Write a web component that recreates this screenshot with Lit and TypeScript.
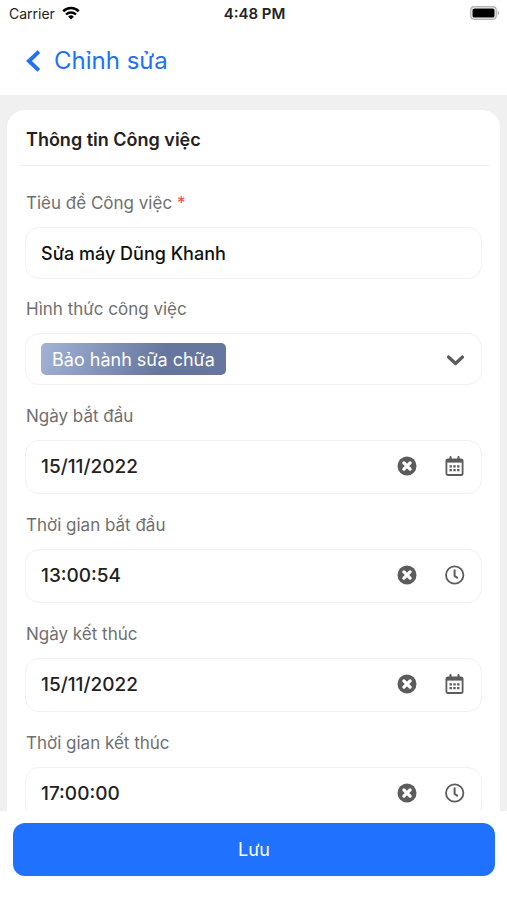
import { LitElement, html, css, svg } from "lit";
import { customElement, property, state } from "lit/decorators.js";

const clearIcon = svg`<svg viewBox="0 0 20 20" width="20" height="20" aria-hidden="true">
  <circle cx="10" cy="10" r="9.5" fill="#5c5c5c"/>
  <path d="M6.9 6.9l6.2 6.2M13.1 6.9l-6.2 6.2" stroke="#fff" stroke-width="3.3" stroke-linecap="round"/>
</svg>`;

const calendarIcon = svg`<svg viewBox="0 0 20 20" width="20" height="20" aria-hidden="true">
  <rect x="1.4" y="3.4" width="16.2" height="15.6" rx="1.6" fill="none" stroke="#5c5c5c" stroke-width="1.8"/>
  <path d="M1.1 3.2h16.8v3.4H1.1z" fill="#5c5c5c"/>
  <path d="M5.5 1.2v3M13.5 1.2v3" stroke="#5c5c5c" stroke-width="2.2" stroke-linecap="round"/>
  <path d="M4.5 10.3h2.4M8.3 10.3h2.4M12.1 10.3h2.4M4.5 14.2h2.4M8.3 14.2h2.4M12.1 14.2h2.4" stroke="#5c5c5c" stroke-width="2.3"/>
</svg>`;

const clockIcon = svg`<svg viewBox="1 0 20 20" width="20" height="20" aria-hidden="true">
  <circle cx="10.7" cy="10" r="8.7" fill="none" stroke="#5c5c5c" stroke-width="1.8"/>
  <path d="M10.6 5.200v5.800l2.500 1.600" fill="none" stroke="#5c5c5c" stroke-width="2" stroke-linecap="round" stroke-linejoin="round"/>
</svg>`;

@customElement("picker-field")
export class PickerField extends LitElement {
  @property() label = "";
  @property() kind: "date" | "time" = "date";
  @property() value = "";

  static styles = css`
    :host { display: block; }
    .label { display: block; height: 24px; line-height: 24px; font-size: 17px; color: #6f6f6f; margin-bottom: 12px; padding-left: 1px; }
    .box {
      display: flex; align-items: center; height: 54px; box-sizing: border-box;
      border: 1px solid #f1f1f1; border-radius: 14px; padding: 0 16px 2px 15px; background: #fff;
    }
    .input {
      flex: 1; min-width: 0; border: 0; padding: 0; outline: 0; background: none;
      font: 500 19px "Inter", sans-serif; color: #222;
    }
    .icon { display: flex; border: 0; padding: 0; background: none; cursor: pointer; }
    .clear { margin-right: 28px; }
  `;

  render() {
    return html`
      <label class="label" for="value">${this.label}</label>
      <div class="box">
        <input class="input" id="value" type="text" .value=${this.value}
          @input=${(e: Event) => (this.value = (e.target as HTMLInputElement).value)} />
        <button class="icon clear" type="button" aria-label="Xóa" @click=${() => (this.value = "")}>${clearIcon}</button>
        <button class="icon" type="button" aria-label=${this.label}>${this.kind === "date" ? calendarIcon : clockIcon}</button>
      </div>
    `;
  }
}

@customElement("status-bar")
export class StatusBar extends LitElement {
  static styles = css`
    :host {
      display: grid; grid-template-columns: 1fr auto 1fr; align-items: center;
      height: 26px; padding: 0 7px 0 9px; font-size: 14px; color: #222; flex: none;
    }
    .carrier { display: flex; align-items: center; gap: 7px; }
    .time { font-size: 15px; font-weight: 600; }
    .battery { justify-self: end; display: flex; }
  `;

  render() {
    return html`
      <div class="carrier">
        <span>Carrier</span>
        <svg viewBox="0 0 18 14" width="18" height="14" aria-hidden="true">
          <path d="M1.200 5.200a11.200 11.200 0 0 1 15.600 0" fill="none" stroke="#000" stroke-width="2.600"/>
          <path d="M4 8.500a7.200 7.200 0 0 1 10 0" fill="none" stroke="#000" stroke-width="2.400"/>
          <path d="M9 13.600l-2.900-2.900a4.200 4.200 0 0 1 5.800 0z" fill="#000"/>
        </svg>
      </div>
      <div class="time">4:48 PM</div>
      <div class="battery">
        <svg viewBox="0 0 30 14" width="30" height="14" aria-hidden="true">
          <rect x=".8" y=".8" width="25.400" height="12.400" rx="3.400" fill="#fff" stroke="#b4b4b4" stroke-width="1.400"/>
          <rect x="2.500" y="2.500" width="22" height="9" rx="1.600" fill="#000"/>
          <path d="M27.600 4.800a2.300 2.300 0 0 1 0 4.400z" fill="#b4b4b4"/>
        </svg>
      </div>
    `;
  }
}

@customElement("app-root")
export class AppRoot extends LitElement {
  @state() private jobTitle = "Sửa máy Dũng Khanh";

  private pickers = [
    { label: "Ngày bắt đầu", kind: "date", value: "15/11/2022" },
    { label: "Thời gian bắt đầu", kind: "time", value: "13:00:54" },
    { label: "Ngày kết thúc", kind: "date", value: "15/11/2022" },
    { label: "Thời gian kết thúc", kind: "time", value: "17:00:00" },
  ];

  static styles = css`
    :host {
      display: flex; flex-direction: column; height: 100vh; background: #fff;
      font-family: "Inter", sans-serif; color: #222;
    }
    .header { flex: none; display: flex; align-items: center; gap: 13px; height: 69px; padding: 0 26px; box-sizing: border-box; }
    .back { display: flex; border: 0; padding: 0; background: none; color: #2171f7; cursor: pointer; }
    .title { margin: 0; font-size: 24px; font-weight: 400; line-height: 32px; color: #2171f7; }
    .main { flex: 1; min-height: 0; overflow-y: auto; scrollbar-width: none; background: #f0f0f0; padding: 15px 7px 0; }
    .card { background: #fff; border-radius: 18px 18px 0 0; padding: 0 18px 24px; }
    .heading {
      margin: 0 -7px 0 -5px; padding: 0 6px; height: 56px; box-sizing: border-box;
      border-bottom: 1px solid #eeeeee; font-size: 18px; font-weight: 600; line-height: 59px;
    }
    .form { padding-top: 25px; display: flex; flex-direction: column; }
    .group + .group { margin-top: 18px; }
    .picker { margin-top: 19px; }
    .label { display: block; height: 24px; line-height: 24px; font-size: 17px; color: #6f6f6f; margin-bottom: 12px; padding-left: 1px; }
    .required { color: #f5424f; }
    .box {
      display: flex; align-items: center; height: 52px; box-sizing: border-box;
      border: 1px solid #f1f1f1; border-radius: 14px; padding: 0 16px 0 15px; background: #fff;
    }
    .input {
      flex: 1; min-width: 0; border: 0; padding: 0; outline: 0; background: none;
      font: 500 18px "Inter", sans-serif; color: #111;
    }
    .chip {
      appearance: none; height: 32px; border: 0; border-radius: 5px; padding: 0 11px;
      background: linear-gradient(110deg, #a3b3d5, #66769e 65%); color: #fff;
      font: 400 18px "Inter", sans-serif; cursor: pointer;
    }
    .spacer { flex: 1; }
    .footer { flex: none; background: #fff; padding: 12px 12px 24px 13px; }
    .save {
      display: block; width: 100%; height: 53px; border: 0; border-radius: 12px;
      background: #2171ff; color: #fff; font: 400 18px "Inter", sans-serif; cursor: pointer;
    }
  `;

  render() {
    return html`
      <status-bar></status-bar>
      <header class="header">
        <button class="back" type="button" aria-label="Quay lại">
          <svg viewBox="0 0 15 22" width="15" height="22" aria-hidden="true">
            <path d="M12.800 1.600L3 11l9.800 9.400" fill="none" stroke="currentColor" stroke-width="4"/>
          </svg>
        </button>
        <h1 class="title">Chỉnh sửa</h1>
      </header>
      <main class="main">
        <section class="card">
          <h2 class="heading">Thông tin Công việc</h2>
          <form class="form" id="job" @submit=${(e: Event) => e.preventDefault()}>
            <div class="group">
              <label class="label" for="title">Tiêu đề Công việc <span class="required">*</span></label>
              <div class="box">
                <input class="input" id="title" type="text" required .value=${this.jobTitle}
                  @input=${(e: Event) => (this.jobTitle = (e.target as HTMLInputElement).value)} />
              </div>
            </div>
            <div class="group">
              <label class="label" for="type">Hình thức công việc</label>
              <div class="box">
                <select class="chip" id="type"><option>Bảo hành sữa chữa</option></select>
                <span class="spacer"></span>
                <svg viewBox="0 0 20 20" width="20" height="20" aria-hidden="true">
                  <path d="M3.500 8l7 6.500 7-6.500" fill="none" stroke="#5c5c5c" stroke-width="3.200" stroke-linecap="round" stroke-linejoin="round"/>
                </svg>
              </div>
            </div>
            ${this.pickers.map((p) => html`
              <picker-field class="picker" .label=${p.label} .kind=${p.kind as "date" | "time"} .value=${p.value}></picker-field>
            `)}
          </form>
        </section>
      </main>
      <footer class="footer">
        <button class="save" type="submit" form="job">Lưu</button>
      </footer>
    `;
  }
}
